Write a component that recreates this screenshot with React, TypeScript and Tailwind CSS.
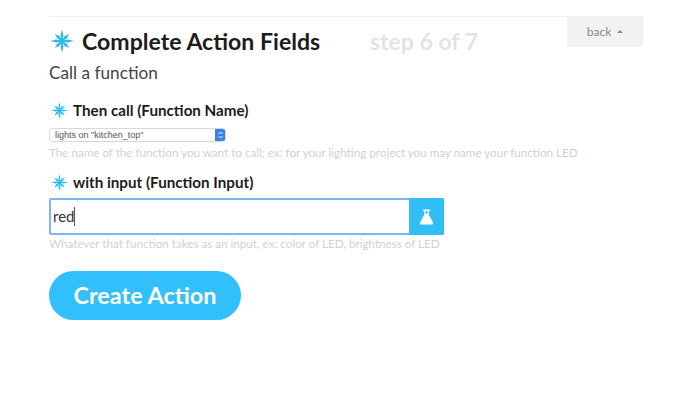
import React from "react";

function Star({ size, className }: { size: number; className?: string }) {
  const rays = [0, 45, 90, 135, 180, 225, 270, 315];
  return (
    <svg width={size} height={size} viewBox="0 0 24 24" className={className}>
      {rays.map((r) => (
        <polygon
          key={r}
          points={r % 90 === 0 ? "12,12 10.6,6.5 12,0 13.4,6.5" : "12,12 10.4,7 12,2 13.6,7"}
          fill="#2bb8ee"
          transform={`rotate(${r} 12 12)`}
        />
      ))}
      <circle cx="12" cy="12" r="3" fill="#2bb8ee" />
    </svg>
  );
}

export default function App() {
  return (
    <div className="relative w-[680px] h-[414px] bg-white overflow-hidden pl-[49px] pt-4 font-['Lato','Liberation_Sans',sans-serif]">
      <div className="h-px w-[591px] bg-[#f0f0f0]" />
      <div className="absolute left-[567px] top-[16px] w-[76px] h-[31px] bg-[#f2f2f2] rounded-b-[2px] flex items-center justify-center gap-[6px] text-[12px] text-[#8a8a8a]">
        <span>back</span>
        <span className="w-0 h-0 border-x-[3.5px] border-x-transparent border-b-[3.5px] border-b-[#8a8a8a]" />
      </div>

      <div className="flex items-center mt-[9px] h-[30px]">
        <Star size={24} className="ml-px" />
        <h1 className="ml-[8px] text-[23.1px] leading-[30px] font-bold text-[#1c1c1c] w-[288px] whitespace-nowrap">Complete Action Fields</h1>
        <span className="text-[23px] leading-[30px] font-bold text-[#e3e3e3] whitespace-nowrap">step 6 of 7</span>
      </div>

      <p className="mt-[5px] text-[17.2px] leading-[24px] text-[#444]">Call a function</p>

      <div className="flex items-center mt-[14px] h-[22px] ml-[2px]">
        <Star size={17} />
        <span className="ml-[5px] text-[15.2px] font-bold text-[#1c1c1c] whitespace-nowrap">Then call (Function Name)</span>
      </div>

      <div className="mt-[7px] flex w-[177px] h-[14px] rounded-[3px] border border-[#d8d8d8] bg-white overflow-hidden box-border">
        <span className="flex-1 pl-[5px] text-[9px] leading-[12px] text-[#555] font-['Liberation_Sans',sans-serif] whitespace-nowrap">lights on "kitchen_top"</span>
        <span className="w-[10px] h-full bg-[#3b82e8] flex items-center justify-center">
          <svg width="7" height="10" viewBox="0 0 7 10">
            <path d="M1.5 4 L3.5 2 L5.5 4 M1.5 6 L3.5 8 L5.5 6" fill="none" stroke="#fff" strokeWidth="1" />
          </svg>
        </span>
      </div>

      <p className="mt-[3px] text-[11.65px] leading-[16px] text-[#cfd1d3] whitespace-nowrap">
        The name of the function you want to call; ex: for your lighting project you may name your function LED
      </p>

      <div className="flex items-center mt-[10px] h-[22px] ml-[2px]">
        <Star size={17} />
        <span className="ml-[5px] text-[15.2px] font-bold text-[#1c1c1c] whitespace-nowrap">with input (Function Input)</span>
      </div>

      <div className="mt-[5px] flex w-[395px] h-[37px] rounded-[2px] border-2 border-[#7db7f0] bg-white box-border">
        <div className="flex-1 flex items-center pl-[2px] text-[15px] text-[#333]">
          <span>red</span>
          <span className="w-px h-[19px] bg-[#555]" />
        </div>
        <div className="w-[35px] bg-[#31bdf6] flex items-center justify-center -my-[2px] -mr-[2px] rounded-r-[2px]">
          <svg width="15" height="16" viewBox="0 0 16 17">
            <path d="M4.5 0.5 H11.5 V2 H10.4 V6 L15 14.5 Q15.6 16.5 13.6 16.5 H2.4 Q0.4 16.5 1 14.5 L5.6 6 V2 H4.5 Z M7 2 V5 H9 V2 Z" fill="#fff" fillRule="evenodd" />
          </svg>
        </div>
      </div>

      <p className="mt-[1px] text-[11.65px] leading-[16px] text-[#cfd1d3] whitespace-nowrap">
        Whatever that function takes as an input, ex: color of LED, brightness of LED
      </p>

      <div className="mt-[19px] flex items-center justify-center w-[192px] h-[49px] rounded-full bg-[#31c0fb] text-white text-[23.4px] font-bold">
        Create Action
      </div>
    </div>
  );
}
